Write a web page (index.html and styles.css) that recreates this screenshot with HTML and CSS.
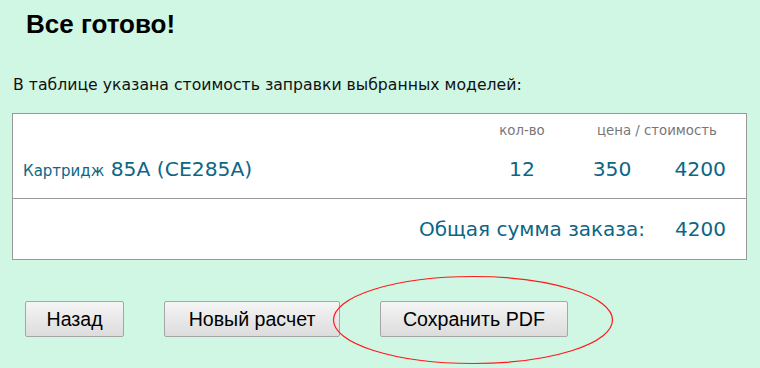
FILE: index.html
```html
<!DOCTYPE html>
<html lang="ru">
  <head>
    <meta charset="UTF-8" />
    <meta name="viewport" content="width=device-width, initial-scale=1" />
    <title>Расчет стоимости заправки</title>
    <link rel="stylesheet" href="styles.css">
  </head>

  <body>
    <div class="page">
      <h1 class="title">Все готово!</h1>

      <p class="intro">В таблице указана стоимость заправки выбранных моделей:</p>

      <div class="priceTable">
        <div class="headRow">
          <span class="name"></span>
          <span class="qty">кол-во</span>
          <span class="priceHead">цена / стоимость</span>
        </div>

        <div class="itemRow">
          <span class="name"><small>Картридж</small> 85А (СЕ285А)</span>
          <span class="qty">12</span>
          <span class="price">350</span>
          <span class="sum">4200</span>
        </div>

        <div class="totalRow">
          <span class="totalLabel">Общая сумма заказа:</span>
          <span class="sum">4200</span>
        </div>
      </div>

      <div class="buttons">
        <button class="btn btnBack" type="button">Назад</button>
        <button class="btn btnNew" type="button">Новый расчет</button>
        <button class="btn" type="button">Сохранить PDF</button>

        <!-- red mark around the pdf button -->
        <svg class="mark" width="282" height="90" viewBox="0 0 282 90">
          <ellipse cx="141" cy="45" rx="139.5" ry="43.5" fill="none" stroke="#ff1a1a" stroke-width="1.2" />
        </svg>
      </div>
    </div>
  </body>
</html>
```

FILE: styles.css
```css
* {
  box-sizing: border-box;
}

html,
body {
  margin: 0;
  padding: 0;
}

body {
  font-family: "DejaVu Sans", Verdana, sans-serif;
  background-color: #cff7e4;
  color: #111;
}

.page {
  width: 760px;
  height: 368px;
  padding: 8px 0 0 0;
}

.title {
  margin: 0 0 0 26px;
  font-family: "Liberation Sans", Arial, sans-serif;
  font-size: 26px;
  font-weight: 700;
  line-height: 32px;
  color: #000;
}

.intro {
  margin: 35px 0 0 13px;
  font-size: 15.7px;
  line-height: 20px;
}

.priceTable {
  width: 735px;
  margin: 18px 0 0 12px;
  background-color: #fff;
  border: 1px solid #999;
  color: #0c6685;
}

.headRow,
.itemRow,
.totalRow {
  display: flex;
  padding: 0 20px 0 10px;
}

.headRow {
  height: 34px;
  line-height: 34px;
  font-size: 13.3px;
  color: #777;
}

.itemRow {
  height: 51px;
  line-height: 42px;
  font-size: 20.3px;
  border-bottom: 1px solid #999;
}

.totalRow {
  height: 60px;
  line-height: 60px;
  font-size: 20px;
  justify-content: flex-end;
}

.name {
  flex: 1;
}

.name small {
  font-size: 15px;
}

.qty {
  width: 90px;
  text-align: center;
}

.price {
  width: 90px;
  text-align: center;
}

.priceHead {
  width: 159px;
  padding-left: 30px;
}

.sum {
  width: 69px;
  text-align: right;
}

.totalLabel {
  padding-right: 12px;
}

.buttons {
  position: relative;
  display: flex;
  gap: 40px;
  margin: 41px 0 0 25px;
}

.btn {
  height: 36px;
  padding: 0 22px;
  font-family: "Liberation Sans", Arial, sans-serif;
  font-size: 19.6px;
  color: #000;
  background: linear-gradient(#f5f5f5, #dcdcdc);
  border: 1px solid #a6a6a6;
  border-radius: 2px;
}

.btnBack {
  padding: 0 20.5px;
}

.btnNew {
  padding: 0 23.5px;
}

.mark {
  position: absolute;
  left: 307px;
  top: -26px;
}
```
